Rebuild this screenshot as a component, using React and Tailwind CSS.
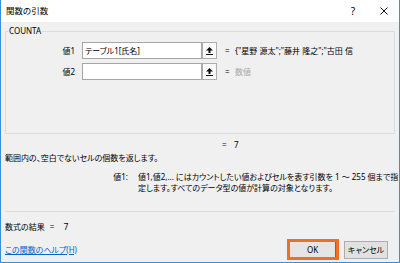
const font = "font-['Noto_Sans','Noto_Sans_CJK_JP',sans-serif] [font-feature-settings:'palt']";

function RefButton() {
  return (
    <div className="flex h-[17px] w-[15px] items-center justify-center border border-[#adadad] bg-[#fbfbfb]">
      <svg width="7" height="8" viewBox="0 0 7 8">
        <path d="M3.5 0L7 3.5H4.5V6H2.5V3.5H0Z" fill="#111" />
        <rect x="0" y="7" width="7" height="1" fill="#111" />
      </svg>
    </div>
  );
}

function ArgRow({ label, value, result, muted }) {
  return (
    <div className="flex h-[17px] items-center">
      <span className="w-[70px] pr-[1px] text-right">{label}</span>
      <div className="ml-[6px] flex h-[17px] w-[120px] items-center border border-[#a6a6a6] bg-white pl-[2px]">
        {value}
      </div>
      <RefButton />
      <span className="ml-[8px] w-[10px]">=</span>
      <span
        className={`w-[136px] overflow-hidden whitespace-nowrap ${muted ? 'text-[#a8a8a8]' : 'text-black'}`}
      >
        {result}
      </span>
    </div>
  );
}

export default function App() {
  return (
    <div
      className={`flex h-[263px] w-[400px] flex-col border-x border-b border-[#3b8fd8] bg-[#f0f0f0] text-[8px] leading-[12px] text-black ${font}`}
    >
      <div className="flex h-[22px] items-center bg-white pl-[5px]">
        <span className="text-[8.5px]">関数の引数</span>
        <span className="ml-auto text-[10px]">?</span>
        <svg className="ml-[25px] mr-[11px]" width="8" height="8" viewBox="0 0 8 8">
          <path d="M0.5 0.5L7.5 7.5M7.5 0.5L0.5 7.5" stroke="#111" strokeWidth="1" />
        </svg>
      </div>

      <fieldset className="mx-[4px] mt-[3px] border border-[#dcdcdc] pb-[53px] pt-[5px]">
        <legend className="ml-[2px] px-[1px] leading-[12px]">COUNTA</legend>
        <div className="flex flex-col gap-[4px]">
          <ArgRow label="値1" value="テーブル1[氏名]" result={'{"星野 源太";"藤井 隆之";"古田 信'} />
          <ArgRow label="値2" value="" result="数値" muted />
        </div>
      </fieldset>

      <div className="mt-[5px] flex pl-[221px]">
        <span className="w-[12px]">=</span>
        <span>7</span>
      </div>

      <p className="mt-[1px] pl-[4px]">範囲内の、空白でないセルの個数を返します。</p>

      <div className="mt-[7px] flex leading-[11px]">
        <span className="w-[137px] pr-[10px] text-right">値1:</span>
        <div className="whitespace-nowrap">
          <p>値1,値2,... にはカウントしたい値およびセルを表す引数を 1 ～ 255 個まで指</p>
          <p>定します。すべてのデータ型の値が計算の対象となります。</p>
        </div>
      </div>

      <div className="mx-[4px] mt-[18px] border-t border-[#dcdcdc]" />

      <div className="mt-[9px] flex pl-[4px]">
        <span>数式の結果</span>
        <span className="ml-[5px] w-[14px]">=</span>
        <span>7</span>
      </div>

      <div className="mt-[6px] flex items-center pl-[4px] pr-[11px]">
        <a className="text-[#0066cc] underline">この関数のヘルプ(H)</a>
        <div className="ml-auto flex items-center">
          <div className="flex h-[21px] w-[52px] border-[3px] border-[#f07020] bg-[#e5e5e5]">
            <span className="flex flex-1 items-center justify-center">OK</span>
            <span className="w-[1px] bg-[#2a7ad5]" />
          </div>
          <button className="ml-[5px] flex h-[18px] w-[44px] items-center justify-center border border-[#adadad] bg-[#e1e1e1]">
            キャンセル
          </button>
        </div>
      </div>
    </div>
  );
}
